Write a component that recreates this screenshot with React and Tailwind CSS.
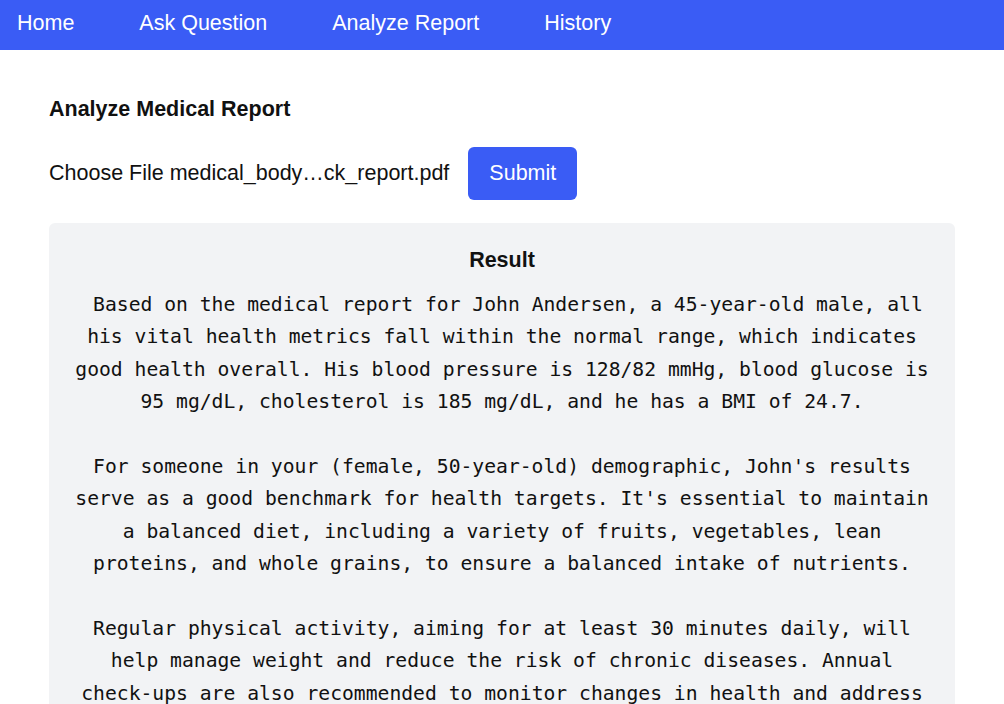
import React from "react";

const resultText = ` Based on the medical report for John Andersen, a 45-year-old male, all his vital health metrics fall within the normal range, which indicates good health overall. His blood pressure is 128/82 mmHg, blood glucose is 95 mg/dL, cholesterol is 185 mg/dL, and he has a BMI of 24.7.

For someone in your (female, 50-year-old) demographic, John's results serve as a good benchmark for health targets. It's essential to maintain a balanced diet, including a variety of fruits, vegetables, lean proteins, and whole grains, to ensure a balanced intake of nutrients.

Regular physical activity, aiming for at least 30 minutes daily, will help manage weight and reduce the risk of chronic diseases. Annual check-ups are also recommended to monitor changes in health and address any potential concerns early.`;

export default function App() {
  const sans = { fontFamily: '"Liberation Sans", Arial, sans-serif' };
  return (
    <div className="min-h-screen bg-white text-[#111]" style={sans}>
      <nav className="flex h-[50px] items-center gap-[65px] bg-[#3a5cf5] pb-[2px] pl-[17px] text-[21.5px] text-white">
        <a href="#" className="leading-none">Home</a>
        <a href="#" className="leading-none">Ask Question</a>
        <a href="#" className="leading-none">Analyze Report</a>
        <a href="#" className="leading-none">History</a>
      </nav>
      <main className="px-[49px] pt-[45px]">
        <h2 className="text-[21.5px] font-bold leading-[28px]">Analyze Medical Report</h2>
        <div className="mt-[24px] flex items-center gap-[19px]">
          <span className="text-[21.5px]">Choose File medical_body…ck_report.pdf</span>
          <button className="h-[53px] rounded-[6px] bg-[#3a5cf5] px-[21px] text-[21.5px] text-white">
            Submit
          </button>
        </div>
        <div className="mt-[23px] rounded-[6px] bg-[#f2f3f5] px-[24px] pb-[24px] pt-[23px]">
          <h3 className="text-center text-[21.5px] font-bold leading-[28px]">Result</h3>
          <pre
            className="mt-[15px] whitespace-pre-wrap text-center text-[19.7px] leading-[32.4px] text-[#111]"
            style={{ fontFamily: '"DejaVu Sans Mono", monospace' }}
          >
            {resultText}
          </pre>
        </div>
      </main>
    </div>
  );
}
